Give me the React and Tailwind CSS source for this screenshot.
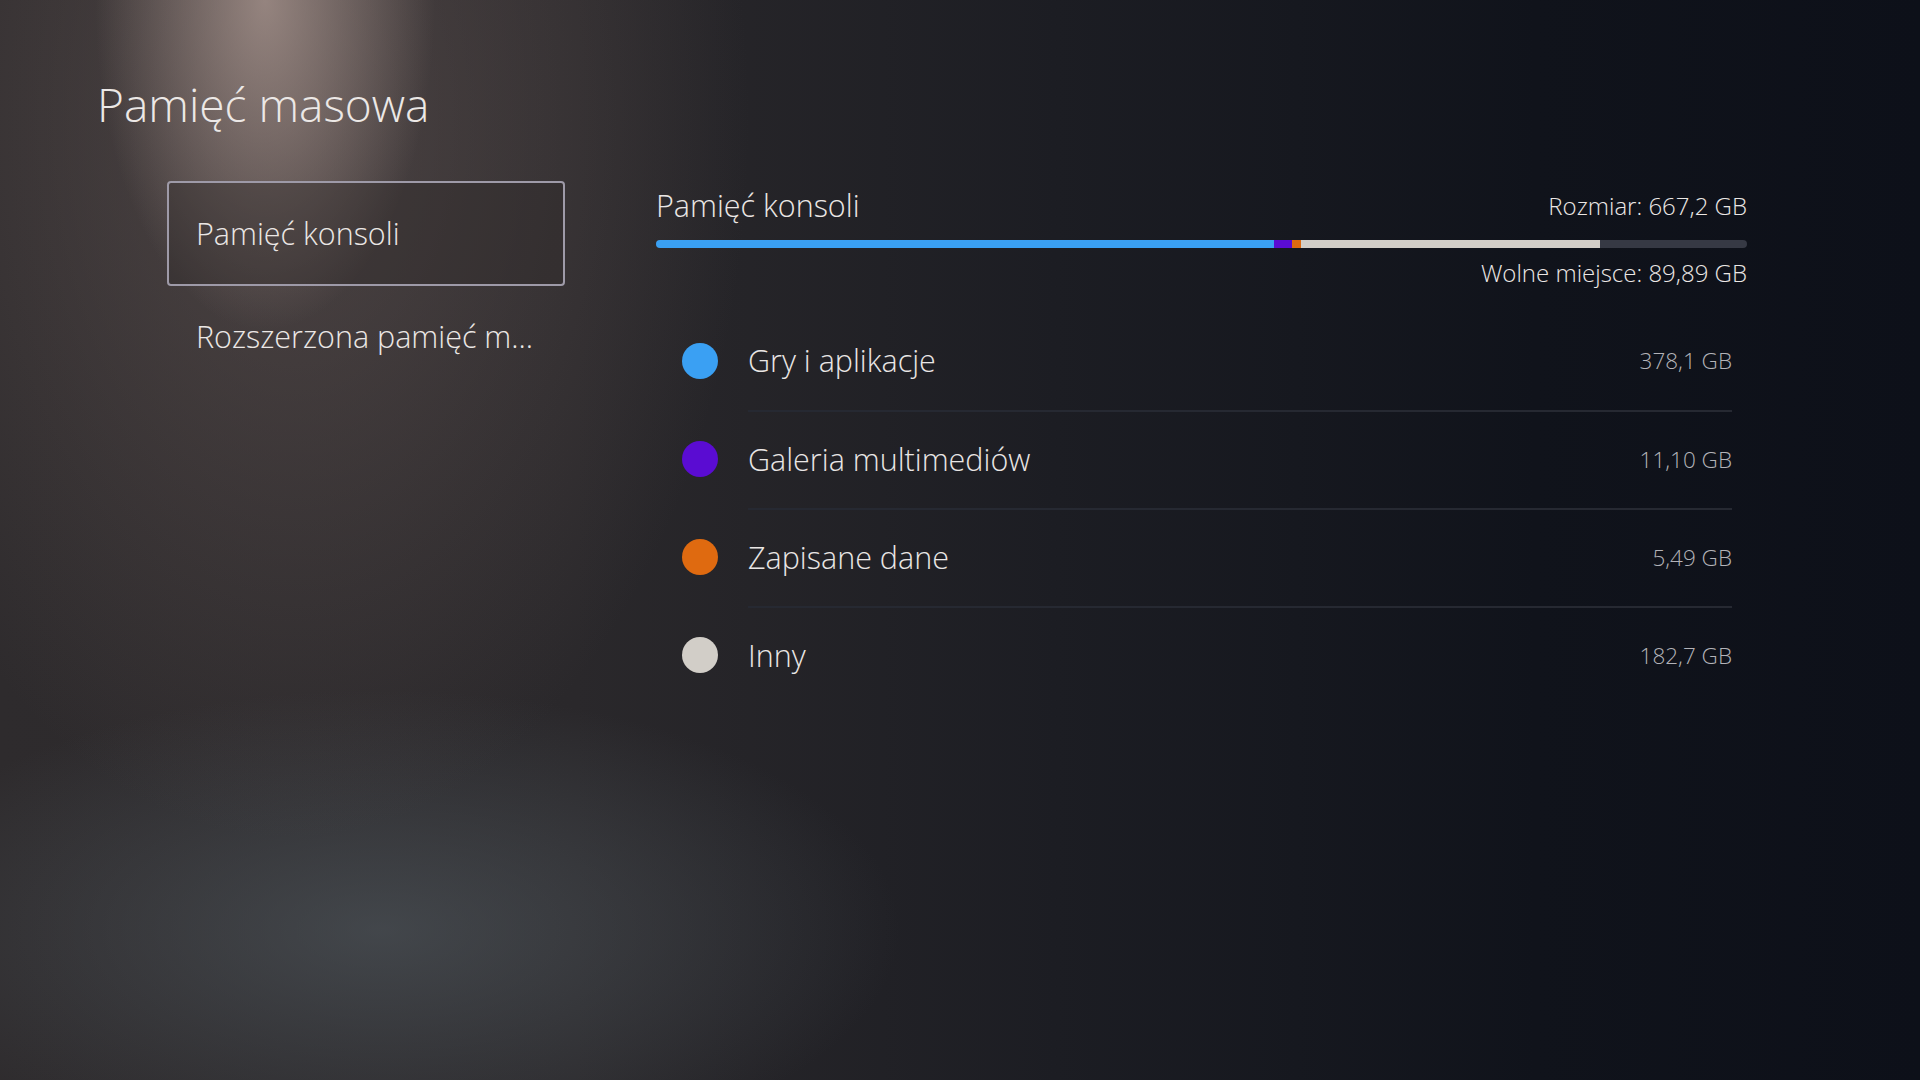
import React from 'react';

const TOTAL = 667.2;

const categories = [
  { label: 'Gry i aplikacje', value: '378,1 GB', size: 378.1, color: 'bg-[#3aa0f3]' },
  { label: 'Galeria multimediów', value: '11,10 GB', size: 11.1, color: 'bg-[#5a0cd2]' },
  { label: 'Zapisane dane', value: '5,49 GB', size: 5.49, color: 'bg-[#df6a10]' },
  { label: 'Inny', value: '182,7 GB', size: 182.7, color: 'bg-[#d2cec8]' },
];

function UsageBar() {
  return (
    <div className="flex h-2 w-full overflow-hidden rounded-full bg-[#363944]">
      {categories.map((c) => (
        <div key={c.label} className={`h-full ${c.color}`} style={{ width: `${(c.size / TOTAL) * 100}%` }} />
      ))}
    </div>
  );
}

function CategoryRow({ label, value, color, first }) {
  return (
    <div className="flex h-[98px] items-center">
      <div className={`ml-[26px] h-9 w-9 shrink-0 rounded-full ${color}`} />
      <div
        className={`ml-[30px] mr-[15px] flex h-full flex-1 items-center justify-between ${
          first ? '' : 'border-t-2 border-[#262932]'
        }`}
      >
        <span className="text-[30.5px] text-[#e9e6e5]">{label}</span>
        <span className="text-[22.5px] text-[#b3b3b8]">{value}</span>
      </div>
    </div>
  );
}

export default function App() {
  return (
    <div className="relative h-[1080px] w-full overflow-hidden bg-[#12141c] font-['Open_Sans',sans-serif] font-light text-[#ebe7e5] bg-[image:radial-gradient(ellipse_170px_330px_at_265px_0px,rgba(175,155,148,0.75),transparent),radial-gradient(ellipse_460px_720px_at_290px_120px,rgba(110,95,92,0.5),transparent),radial-gradient(ellipse_520px_240px_at_380px_930px,rgba(82,90,96,0.6),transparent),linear-gradient(90deg,#2e2b2d_0%,#2a282b_30%,#1c1d23_55%,#10131b_80%,#0d1019_100%)]">
      {/* Nagłówek */}
      <h1 className="pl-[97px] pt-[75px] text-[46px] leading-[58px] text-[#ece8e6]">Pamięć masowa</h1>

      <div className="mt-[48px] flex">
        {/* Menu po lewej */}
        <nav className="ml-[167px] w-[398px] shrink-0">
          <div className="flex h-[105px] items-center rounded-[4px] border-2 border-[#9e9aa8] bg-[#2f2a2b]/40 pl-[27px] text-[30.5px]">
            Pamięć konsoli
          </div>
          <div className="flex h-[102px] items-center pl-[29px] text-[30.5px]">Rozszerzona pamięć m...</div>
        </nav>

        {/* Szczegóły pamięci */}
        <section className="ml-[91px] w-[1091px]">
          <div className="flex h-[50px] items-center justify-between">
            <span className="text-[30.5px]">Pamięć konsoli</span>
            <span className="text-[24px]">Rozmiar: 667,2 GB</span>
          </div>
          <div className="mt-[9px]">
            <UsageBar />
          </div>
          <div className="mt-[10px] text-right text-[24px] leading-[30px]">Wolne miejsce: 89,89 GB</div>

          <div className="mt-[24px]">
            {categories.map((c, i) => (
              <CategoryRow key={c.label} {...c} first={i === 0} />
            ))}
          </div>
        </section>
      </div>
    </div>
  );
}
